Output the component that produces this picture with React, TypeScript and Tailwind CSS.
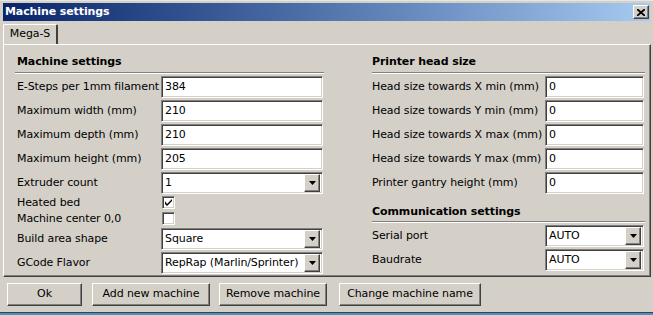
import React from "react";

const sunken =
  "border border-t-[#808080] border-l-[#808080] border-r-white border-b-white shadow-[inset_1px_1px_0_#404040,inset_-1px_-1px_0_#d4d0c8]";
const raised =
  "border border-t-white border-l-white border-r-[#404040] border-b-[#404040] shadow-[inset_-1px_-1px_0_#808080]";

const Input = ({ value, w }: { value: string; w: string }) => (
  <div className={`${w} h-[22px] bg-white ${sunken} flex items-center pl-[3px] text-black`}>{value}</div>
);

const Select = ({ value, w }: { value: string; w: string }) => (
  <div className={`${w} h-[22px] bg-white ${sunken} flex items-center justify-between pl-[3px] pr-[2px] text-black`}>
    <span className="whitespace-nowrap">{value}</span>
    <div className={`w-[16px] h-[18px] shrink-0 bg-[#d4d0c8] ${raised} flex items-center justify-center`}>
      <svg width="7" height="4" viewBox="0 0 7 4">
        <path d="M0 0h7L3.5 4z" fill="#000" />
      </svg>
    </div>
  </div>
);

const Check = ({ checked }: { checked?: boolean }) => (
  <div className={`w-[13px] h-[13px] bg-white ${sunken} flex items-center justify-center`}>
    {checked && (
      <svg width="7" height="7" viewBox="0 0 7 7">
        <path d="M0 2v3l2 2 5-5V0L2 5z" fill="#000" />
      </svg>
    )}
  </div>
);

const Row = ({ label, children, lw }: any) => (
  <div className="flex items-center h-[22px]">
    <div className={`${lw} shrink-0 whitespace-nowrap`}>{label}</div>
    {children}
  </div>
);

const Header = ({ title, className = "" }: any) => (
  <div className={`font-bold border-b border-[#808080] shadow-[0_1px_0_white] pb-[1px] mb-[3px] ${className}`}>{title}</div>
);

const Btn = ({ label, w, className = "" }: any) => (
  <div className={`${w} h-[23px] ${raised} flex items-center justify-center text-black ${className}`}>{label}</div>
);

export default function App() {
  return (
    <div className="w-[653px] h-[315px] bg-[#d4d0c8] font-['DejaVu_Sans',sans-serif] text-[11px] tracking-[-0.1px] text-black overflow-hidden flex flex-col border-t border-t-[#e8e6e0]">
      {/* title bar */}
      <div className="mx-[3px] mt-[2px] h-[18px] bg-gradient-to-r from-[#0a246a] to-[#a6caf0] flex items-center justify-between pl-[2px] pr-[1px]">
        <span className="text-white font-bold text-[11px]">Machine settings</span>
        <div className={`w-[16px] h-[14px] bg-[#d4d0c8] ${raised} flex items-center justify-center`}>
          <svg width="8" height="7" viewBox="0 0 8 7">
            <path d="M0 0l8 7M8 0L0 7" stroke="#000" strokeWidth="1.8" />
          </svg>
        </div>
      </div>

      {/* tab strip */}
      <div className="mx-[3px] mt-[3px] h-[20px] flex items-end">
        <div className="h-[20px] w-[55px] border-l border-t border-white border-r-2 border-r-[#404040] rounded-t-[2px] flex items-center justify-center pb-[1px]">
          Mega-S
        </div>
      </div>

      {/* tab page */}
      <div className="mx-[3px] w-[648px] h-[233px] border-t border-l border-white border-r border-b border-r-[#404040] border-b-[#404040] shadow-[inset_-1px_-1px_0_#808080] flex pt-[9px]">
        <div className="ml-[11px] w-[309px] flex flex-col">
          <Header title="Machine settings" className="pl-[2px] h-[19px]" />
          <div className="flex flex-col gap-[2px] pl-[2px]">
            <Row label="E-Steps per 1mm filament" lw="w-[144px]"><Input value="384" w="w-[162px]" /></Row>
            <Row label="Maximum width (mm)" lw="w-[144px]"><Input value="210" w="w-[162px]" /></Row>
            <Row label="Maximum depth (mm)" lw="w-[144px]"><Input value="210" w="w-[162px]" /></Row>
            <Row label="Maximum height (mm)" lw="w-[144px]"><Input value="205" w="w-[162px]" /></Row>
            <Row label="Extruder count" lw="w-[144px]"><Select value="1" w="w-[162px]" /></Row>
            <div className="flex items-start h-[14px]">
              <div className="w-[145px] leading-[13px]">Heated bed</div>
              <Check checked />
            </div>
            <div className="flex items-start h-[14px]">
              <div className="w-[145px] leading-[13px]">Machine center 0,0</div>
              <Check />
            </div>
            <Row label="Build area shape" lw="w-[144px]"><Select value="Square" w="w-[162px]" /></Row>
            <Row label="GCode Flavor" lw="w-[144px]"><Select value="RepRap (Marlin/Sprinter)" w="w-[162px]" /></Row>
          </div>
        </div>

        <div className="ml-[48px] w-[273px] flex flex-col">
          <Header title="Printer head size" className="h-[19px]" />
          <div className="flex flex-col gap-[2px]">
            <Row label="Head size towards X min (mm)" lw="w-[173px]"><Input value="0" w="w-[99px]" /></Row>
            <Row label="Head size towards Y min (mm)" lw="w-[173px]"><Input value="0" w="w-[99px]" /></Row>
            <Row label="Head size towards X max (mm)" lw="w-[173px]"><Input value="0" w="w-[99px]" /></Row>
            <Row label="Head size towards Y max (mm)" lw="w-[173px]"><Input value="0" w="w-[99px]" /></Row>
            <Row label="Printer gantry height (mm)" lw="w-[173px]"><Input value="0" w="w-[99px]" /></Row>
          </div>
          <Header title="Communication settings" className="mt-[10px] h-[18px]" />
          <div className="flex flex-col gap-[2px]">
            <Row label="Serial port" lw="w-[173px]"><Select value="AUTO" w="w-[99px]" /></Row>
            <Row label="Baudrate" lw="w-[173px]"><Select value="AUTO" w="w-[99px]" /></Row>
          </div>
        </div>
      </div>

      {/* buttons */}
      <div className="flex mt-[6px] pl-[7px]">
        <Btn label="Ok" w="w-[75px]" />
        <Btn label="Add new machine" w="w-[118px]" className="ml-[10px]" />
        <Btn label="Remove machine" w="w-[108px]" className="ml-[9px]" />
        <Btn label="Change machine name" w="w-[142px]" className="ml-[12px]" />
      </div>

      <div className="mt-auto h-[3px] border-t border-[#404040] bg-[#3d95c8]" />
    </div>
  );
}
